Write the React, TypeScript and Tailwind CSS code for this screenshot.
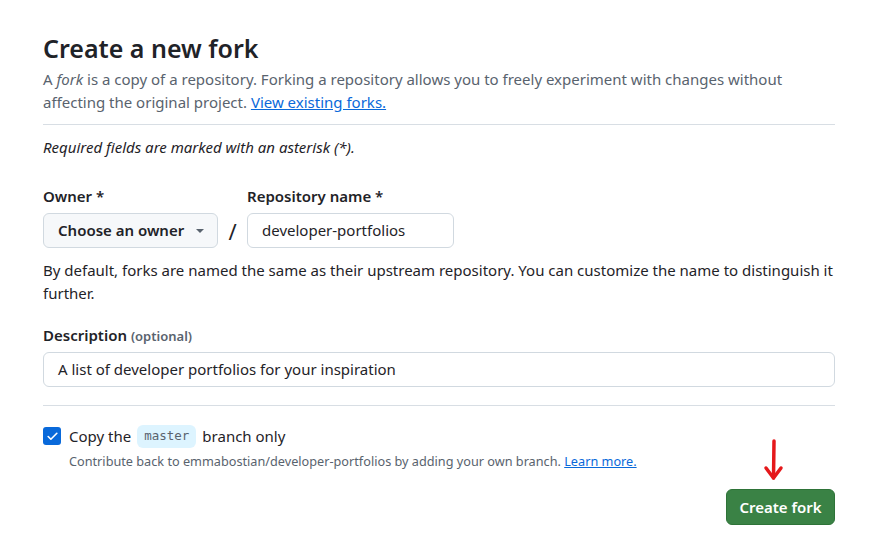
import { Check } from "lucide-react";

const sans = "font-['Noto_Sans','Segoe_UI',sans-serif]";

function Divider({ className = "" }: { className?: string }) {
  return <div className={`h-px bg-[#d8dee4] ${className}`} />;
}

export default function App() {
  return (
    <div className={`relative min-h-[553px] w-[872px] bg-white text-[#1f2328] ${sans}`}>
      <div className="w-[792px] pl-[43px] pt-[33px] box-content">
        <h1 className="text-[25px] font-semibold leading-[30px]">Create a new fork</h1>
        <p className="mt-[5px] text-[15px] leading-[23px] text-[#59636e]">
          A <em>fork</em> is a copy of a repository. Forking a repository allows you to freely
          experiment with changes without affecting the original project.{" "}
          <a href="#" className="text-[#0969da] underline">
            View existing forks.
          </a>
        </p>
        <Divider className="mt-[10px]" />

        <p className="mt-[11px] text-[15px] italic leading-[23px]">
          Required fields are marked with an asterisk (*).
        </p>

        {/* owner / repo */}
        <div className="mt-[27px] flex items-end">
          <div className="flex flex-col">
            <label className="text-[15px] font-semibold leading-[21px]">Owner *</label>
            <button className="mt-[6px] flex h-[35px] w-[175px] items-center justify-between rounded-[6px] border border-[#d1d9e0] bg-[#f6f8fa] pl-[14px] pr-[13px] text-[15px] font-semibold">
              Choose an owner
              <span className="h-0 w-0 border-x-[4px] border-t-[4px] border-x-transparent border-t-[#59636e]" />
            </button>
          </div>
          <span className="flex h-[35px] w-[29px] items-center justify-center text-[22px] leading-none">/</span>
          <div className="flex flex-col">
            <label className="text-[15px] font-semibold leading-[21px]">Repository name *</label>
            <div className="mt-[6px] flex h-[35px] w-[207px] items-center rounded-[6px] border border-[#d1d9e0] bg-white px-[14px] text-[15px]">
              developer-portfolios
            </div>
          </div>
        </div>
        <p className="mt-[11px] text-[15px] leading-[23px] text-[#1f2328]">
          By default, forks are named the same as their upstream repository. You can customize the
          name to distinguish it further.
        </p>

        {/* description */}
        <label className="mt-[20px] block text-[15px] font-semibold leading-[21px]">
          Description <span className="text-[13px] text-[#59636e]">(optional)</span>
        </label>
        <div className="mt-[5px] flex h-[35px] items-center rounded-[6px] border border-[#d1d9e0] bg-white px-[14px] text-[15px]">
          A list of developer portfolios for your inspiration
        </div>
        <Divider className="mt-[18px]" />

        {/* branch */}
        <div className="mt-[18px] flex h-[24px] items-center">
          <span className="flex h-[18px] w-[18px] items-center justify-center rounded-[3px] bg-[#0969da]">
            <Check className="h-[13px] w-[13px] text-white" strokeWidth={3} />
          </span>
          <span className="ml-[8px] text-[15px] leading-[24px]">Copy the</span>
          <code className="mx-[6px] flex h-[23px] items-center rounded-[6px] bg-[#ddf4ff] px-[7px] font-['DejaVu_Sans_Mono',monospace] text-[12.5px] text-[#59636e]">
            master
          </code>
          <span className="text-[15px] leading-[24px]">branch only</span>
        </div>
        <p className="ml-[26px] mt-[4px] text-[12.7px] leading-[19px] text-[#59636e]">
          Contribute back to emmabostian/developer-portfolios by adding your own branch.{" "}
          <a href="#" className="text-[#0969da] underline">
            Learn more.
          </a>
        </p>

        <div className="mt-[18px] flex justify-end">
          <button className="h-[36px] w-[109px] rounded-[6px] border border-[#2e7338] bg-[#3a8245] text-[15px] font-semibold text-white">
            Create fork
          </button>
        </div>
      </div>

      {/* annotation arrow */}
      <svg
        className="absolute left-[762px] top-[438px]"
        width="24"
        height="44"
        viewBox="0 0 24 44"
        fill="none"
        stroke="#e5181b"
        strokeWidth="3.5"
        strokeLinecap="round"
        strokeLinejoin="round"
      >
        <path d="M12 3 L11.5 40" />
        <path d="M4 30 L11.5 40 L19 30" />
      </svg>
    </div>
  );
}
